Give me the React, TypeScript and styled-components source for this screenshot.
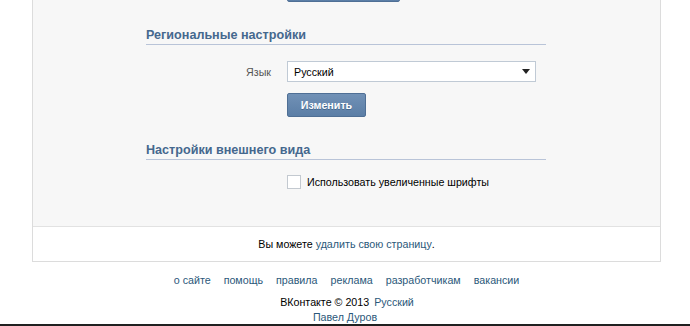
import React from "react";
import styled, { createGlobalStyle } from "styled-components";

const Global = createGlobalStyle`
  html, body { margin: 0; padding: 0; background: #fff; }
  body { font-family: "Liberation Sans", Arial, sans-serif; font-size: 10.7px; color: #000; overflow: hidden; }
  #root { width: 690px; height: 326px; overflow: hidden; }
`;

const Page = styled.div`
  width: 690px;
  height: 326px;
  display: flex;
  flex-direction: column;
  overflow: hidden;
`;

const Panel = styled.div`
  margin-left: 32px;
  width: 627px;
  border: 1px solid #dcdcdc;
  border-top: none;
  background: #fff;
  flex: none;
`;

const Settings = styled.div`
  background: #f7f7f7;
  padding: 0 0 37px 113px;
  border-bottom: 1px solid #e2e2e2;
`;

const Section = styled.div<{ $gap: number }>`
  width: 400px;
  margin-top: ${(p) => p.$gap}px;
`;

const Heading = styled.h2`
  margin: 0;
  font-size: 12.6px;
  font-weight: bold;
  line-height: 16px;
  color: #45688e;
  padding-bottom: 1px;
  border-bottom: 1px solid #b9c4d8;
`;

const Row = styled.div<{ $top: number; $height?: number }>`
  display: flex;
  align-items: center;
  margin-top: ${(p) => p.$top}px;
  height: ${(p) => (p.$height ? `${p.$height}px` : "auto")};
`;

const Label = styled.div`
  width: 125px;
  margin-right: 16px;
  text-align: right;
  color: #555;
`;

const Spacer = styled.div`
  width: 141px;
  flex: none;
`;

const Select = styled.div`
  box-sizing: border-box;
  width: 249px;
  height: 21px;
  border: 1px solid #c0cad5;
  background: #fff;
  display: flex;
  align-items: center;
  justify-content: space-between;
  padding: 0 5px 0 6px;
  color: #000;
`;

const Arrow = styled.span`
  width: 0;
  height: 0;
  border-left: 4px solid transparent;
  border-right: 4px solid transparent;
  border-top: 5px solid #222;
`;

const Button = styled.button<{ $width: number }>`
  box-sizing: border-box;
  width: ${(p) => p.$width}px;
  height: 24px;
  border: 1px solid #4f6f95;
  border-radius: 2px;
  background: linear-gradient(#7191b6, #5b7ea6);
  color: #fff;
  font-family: inherit;
  font-size: 10.7px;
  font-weight: bold;
  padding: 0;
  text-shadow: 0 1px 0 #45688e;
`;

const PrevButton = styled(Button)`
  margin-top: -22px;
  margin-left: 141px;
  display: block;
`;

const Checkbox = styled.span`
  box-sizing: border-box;
  width: 14px;
  height: 14px;
  border: 1px solid #c3c9d0;
  background: #fff;
  margin-right: 6px;
`;

const CheckText = styled.span`
  color: #000;
`;

const Bottom = styled.div`
  height: 34px;
  display: flex;
  align-items: center;
  justify-content: center;
  color: #000;
`;

const Link = styled.a`
  color: #2b587a;
  text-decoration: none;
`;

const Footer = styled.div`
  display: flex;
  flex-direction: column;
  align-items: center;
  flex: 1;
  min-height: 0;
`;

const Links = styled.div`
  display: flex;
  gap: 13px;
  margin-top: 11px;
  line-height: 14px;
  margin-left: 3px;
`;

const Copy = styled.div`
  margin-top: 8px;
  line-height: 14px;
  display: flex;
  gap: 5px;
  margin-left: 4px;
`;

const Author = styled.div`
  margin-top: 2px;
  line-height: 12px;
`;

const DarkBar = styled.div`
  height: 2px;
  background: #202020;
  flex: none;
`;

export default function App() {
  return (
    <>
      <Global />
      <Page>
        <Panel>
          <Settings>
            <PrevButton $width={113}>&nbsp;</PrevButton>
            <Section $gap={25}>
              <Heading>Региональные настройки</Heading>
            </Section>
            <Row $top={16}>
              <Label>Язык</Label>
              <Select>
                <span>Русский</span>
                <Arrow />
              </Select>
            </Row>
            <Row $top={11}>
              <Spacer />
              <Button $width={79}>Изменить</Button>
            </Row>
            <Section $gap={25}>
              <Heading>Настройки внешнего вида</Heading>
            </Section>
            <Row $top={15} $height={14}>
              <Spacer />
              <Checkbox />
              <CheckText>Использовать увеличенные шрифты</CheckText>
            </Row>
          </Settings>
          <Bottom>
            Вы можете&nbsp;<Link href="#">удалить свою страницу</Link>.
          </Bottom>
        </Panel>
        <Footer>
          <Links>
            <Link href="#">о сайте</Link>
            <Link href="#">помощь</Link>
            <Link href="#">правила</Link>
            <Link href="#">реклама</Link>
            <Link href="#">разработчикам</Link>
            <Link href="#">вакансии</Link>
          </Links>
          <Copy>
            <span>ВКонтакте © 2013</span>
            <Link href="#">Русский</Link>
          </Copy>
          <Author>
            <Link href="#">Павел Дуров</Link>
          </Author>
        </Footer>
        <DarkBar />
      </Page>
    </>
  );
}
